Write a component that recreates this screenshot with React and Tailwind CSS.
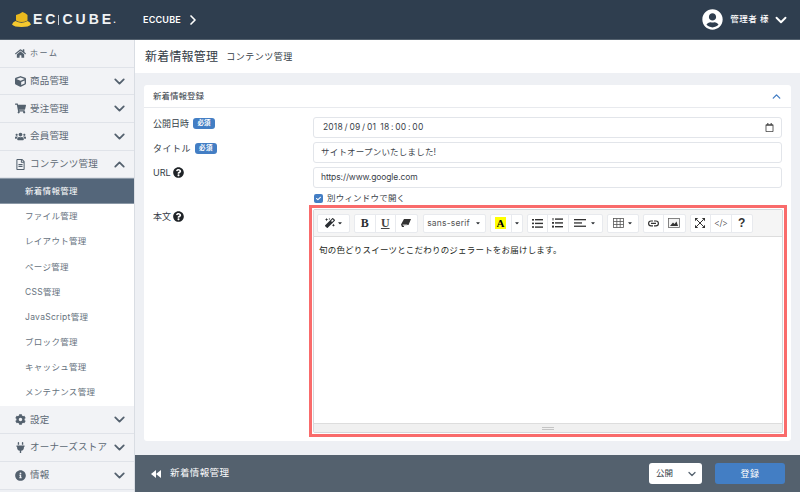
import {
  FaHome, FaCube, FaShoppingCart, FaUsers, FaRegFileAlt, FaCog, FaPlug, FaInfoCircle,
  FaQuestionCircle, FaMagic, FaUserCircle, FaRegCalendar, FaCheck, FaCaretDown,
} from "react-icons/fa";
import { FiChevronDown, FiChevronUp, FiChevronRight } from "react-icons/fi";

const font = { fontFamily: 'Inter, "Noto Sans CJK JP", sans-serif' };
const serif = { fontFamily: '"Liberation Serif", serif' };

const subItems = ["ファイル管理", "レイアウト管理", "ページ管理", "CSS管理", "JavaScript管理", "ブロック管理", "キャッシュ管理", "メンテナンス管理"];

function NavItem({ icon: Icon, label, open, home }) {
  return (
    <div className="flex items-center h-[27.7px] pl-[10px] pr-[6px] bg-[#f2f3f6] border-b border-[#e0e3e9]">
      <span className="w-[20px] flex justify-center text-[#54616e] text-[11px] shrink-0"><Icon /></span>
      <span className={`flex-1 text-[#5c6874] whitespace-nowrap ${home ? "text-[8px] tracking-[1.6px]" : "text-[9.5px] tracking-[0.2px]"}`}>{label}</span>
      {!home && (open
        ? <FiChevronUp className="shrink-0 text-[#54616e] text-[17px] stroke-[2.5]" />
        : <FiChevronDown className="shrink-0 text-[#54616e] text-[17px] stroke-[2.5]" />)}
    </div>
  );
}

function Sidebar() {
  return (
    <aside className="w-[135px] shrink-0 bg-white border-r border-[#d9dde3] flex flex-col">
      <NavItem icon={FaHome} label="ホーム" home />
      <NavItem icon={FaCube} label="商品管理" />
      <NavItem icon={FaShoppingCart} label="受注管理" />
      <NavItem icon={FaUsers} label="会員管理" />
      <NavItem icon={FaRegFileAlt} label="コンテンツ管理" open />
      <div className="h-[25.5px] bg-[#54667a] border-y border-[#8b98a6] pl-[25px] flex items-center text-[8.5px] tracking-[0.3px] text-white">新着情報管理</div>
      {subItems.map((s) => (
        <div key={s} className="h-[25.2px] pl-[25px] flex items-center text-[8.5px] tracking-[0.3px] text-[#66727e]">{s}</div>
      ))}
      <div className="h-[1px] shrink-0" />
      <NavItem icon={FaCog} label="設定" />
      <NavItem icon={FaPlug} label="オーナーズストア" />
      <NavItem icon={FaInfoCircle} label="情報" />
      <div className="flex-1 bg-[#eef0f4]" />
    </aside>
  );
}

function Header() {
  return (
    <header className="h-[40px] shrink-0 bg-[#2f3e4f] border-b border-[#54616e] flex items-center text-white">
      <div className="w-[135px] flex items-center pl-[12px] shrink-0">
        <svg width="19" height="15" viewBox="0 0 19 15" className="shrink-0">
          <path d="M0 12.5 Q1 9.5 3.5 9 Q9.5 12.5 15.5 9 Q18 9.5 19 12.5 Q17 15 9.5 15 Q2 15 0 12.5Z" fill="#f5c92f" />
          <path d="M4 3 Q8 2 10.5 0 Q13.5 1 15.5 3 L15.5 8.5 Q9.5 11.5 4 8.5Z" fill="#eab91e" />
        </svg>
        <span className="ml-[2px] flex items-center text-[14px] font-bold text-[#f0f2f4] whitespace-nowrap" style={{ fontFamily: '"Liberation Sans", sans-serif' }}>
          <span className="tracking-[3px]">EC</span>
          <span className="w-px h-[10px] bg-[#c9ced4] mr-[3px]" />
          <span className="tracking-[3px]">CUBE</span>
          <span className="text-[9px] -ml-[1px] mt-[3px]">.</span>
        </span>
      </div>
      <span className="ml-[8px] text-[9px] font-semibold tracking-[0.2px]">ECCUBE</span>
      <FiChevronRight className="ml-[4px] text-[16px] stroke-[2.5]" />
      <div className="ml-auto flex items-center pr-[10px]">
        <FaUserCircle className="text-[21px]" />
        <span className="ml-[7px] text-[8.5px] tracking-[0.5px] font-medium">管理者 様</span>
        <FiChevronDown className="ml-[3px] text-[18px] stroke-[2.5]" />
      </div>
    </header>
  );
}

function Required() {
  return <span className="ml-[4px] inline-flex items-center justify-center w-[22px] h-[11px] rounded-[3px] bg-[#437ec4] text-white text-[6.5px] font-bold">必須</span>;
}

function Help() {
  return <FaQuestionCircle className="ml-[2px] text-[11px] text-[#1f2327]" />;
}

function Label({ children, className = "" }) {
  return <div className={`flex items-center pl-px text-[9px] text-[#333c46] h-[11px] ${className}`}>{children}</div>;
}

function Input({ children, className = "" }) {
  return (
    <div className={`h-[21px] flex items-center px-[7px] border border-[#e2e5ea] rounded-[3px] bg-white text-[8.5px] text-[#3b434b] ${className}`}>
      {children}
    </div>
  );
}

function ToolGroup({ children, className = "" }) {
  return <div className={`flex h-[19px] rounded-[2px] border border-[#e8eaee] bg-white divide-x divide-[#e8eaee] ${className}`}>{children}</div>;
}

function Tool({ children, w = "w-[20.5px]" }) {
  return <div className={`${w} h-full flex items-center justify-center text-[#2b2f33] text-[9px]`}>{children}</div>;
}

const Caret = () => <FaCaretDown className="ml-[2px] text-[6px] shrink-0" />;

function Editor() {
  return (
    <div className="-ml-[4px] -mr-[5px] mt-[2px] border-[3px] border-[#f96b6b] p-px flex-1 flex">
      <div className="flex-1 flex flex-col border border-[#d5d8dc] rounded-[2px]">
        <div className="h-[27px] shrink-0 flex items-center gap-[4px] pl-[3px] bg-[#f5f5f5] border-b border-[#dddddd]">
          <ToolGroup>
            <Tool w="w-[31px]"><FaMagic className="text-[10px]" /><Caret /></Tool>
          </ToolGroup>
          <ToolGroup className="mr-[1px]">
            <Tool><span className="text-[12px] font-bold" style={serif}>B</span></Tool>
            <Tool><span className="text-[12px] font-bold underline text-[#444]" style={serif}>U</span></Tool>
            <Tool>
              <svg width="10" height="8" viewBox="0 0 10 8" fill="#333">
                <path d="M3 0h7L7.500 6H3.500L2.800 8H1L0 5.500z" />
                <path d="M1.500 5.500h5L6 6.800H2z" fill="#ddd" />
              </svg>
            </Tool>
          </ToolGroup>
          <ToolGroup>
            <Tool w="w-[61px]"><span className="text-[8.5px] text-[#555] tracking-[0.2px]">sans-serif</span><FaCaretDown className="ml-[5px] text-[6px]" /></Tool>
          </ToolGroup>
          <ToolGroup>
            <Tool w="w-[21px]"><span className="w-[11px] h-[12px] bg-[#ffff00] flex items-center justify-center text-[11px] font-bold text-black" style={serif}>A</span></Tool>
            <Tool w="w-[10px]"><FaCaretDown className="text-[6px]" /></Tool>
          </ToolGroup>
          <ToolGroup>
            <Tool>
              <svg width="11" height="9" viewBox="0 0 11 9" fill="#333">
                <rect x="0" y="0" width="2" height="1.6" /><rect x="3" y="0" width="8" height="1.4" />
                <rect x="0" y="3.6" width="2" height="1.6" /><rect x="3" y="3.7" width="8" height="1.4" />
                <rect x="0" y="7.2" width="2" height="1.6" /><rect x="3" y="7.4" width="8" height="1.4" />
              </svg>
            </Tool>
            <Tool>
              <svg width="11" height="10" viewBox="0 0 11 10" fill="#333">
                <rect x="0.5" y="0" width="1" height="2.4" /><rect x="3" y="0.4" width="8" height="1.4" />
                <rect x="0" y="4" width="2" height="1.8" /><rect x="3" y="4.2" width="8" height="1.4" />
                <rect x="0" y="7.6" width="2" height="2" /><rect x="3" y="8" width="8" height="1.4" />
              </svg>
            </Tool>
            <Tool w="w-[33px]">
              <svg width="12" height="8" viewBox="0 0 12 8" fill="#333">
                <rect x="0" y="0" width="12" height="1.3" /><rect x="0" y="3.3" width="8" height="1.3" /><rect x="0" y="6.6" width="12" height="1.3" />
              </svg>
              <FaCaretDown className="ml-[4px] text-[6px] shrink-0" />
            </Tool>
          </ToolGroup>
          <ToolGroup>
            <Tool w="w-[30px]">
              <svg width="11" height="10" viewBox="0 0 11 10" fill="none" stroke="#555" strokeWidth="0.8">
                <rect x="0.5" y="0.5" width="10" height="9" />
                <path d="M0.5 3.5h10M0.5 6.5h10M3.8 0.5v9M7.2 0.5v9" />
              </svg>
              <FaCaretDown className="ml-[3px] text-[6px] shrink-0" />
            </Tool>
          </ToolGroup>
          <ToolGroup>
            <Tool>
              <svg width="11" height="7" viewBox="0 0 11 7" fill="none" stroke="#333" strokeWidth="1.2">
                <path d="M5 1H3a2.400 2.400 0 0 0 0 4.800h2M6 1h2a2.400 2.400 0 0 1 0 4.800H6M3 3.400h5" />
              </svg>
            </Tool>
            <Tool>
              <svg width="12" height="10" viewBox="0 0 12 10">
                <rect x="0.500" y="0.500" width="11" height="9" fill="#f4f4f4" stroke="#666" strokeWidth="0.8" />
                <path d="M2 8 L5 4.500 L6.500 6 L8.500 3.500 L10 8Z" fill="#333" />
              </svg>
            </Tool>
          </ToolGroup>
          <ToolGroup>
            <Tool>
              <svg width="10" height="10" viewBox="0 0 10 10">
                <path d="M1.500 1.500 8.500 8.500M8.500 1.500 1.500 8.500" stroke="#333" strokeWidth="1" fill="none" />
                <path d="M0 0h3.200L0 3.200zM10 0v3.200L6.800 0zM0 10V6.800L3.200 10zM10 10H6.800L10 6.800z" fill="#333" />
              </svg>
            </Tool>
            <Tool><span className="text-[9px] font-light text-[#333] tracking-[-0.5px]">&lt;/&gt;</span></Tool>
            <Tool><span className="text-[12px] font-bold text-[#333]" style={{ fontFamily: '"Liberation Sans", sans-serif' }}>?</span></Tool>
          </ToolGroup>
        </div>
        <div className="flex-1 bg-white pl-[5px] pt-[7px] text-[8.5px] tracking-[0.2px] text-[#1d1f22]">旬の色どりスイーツとこだわりのジェラートをお届けします。</div>
        <div className="h-[9px] shrink-0 bg-[#f0f0f0] border-t border-[#dddddd] flex flex-col items-center justify-center gap-[1px]">
          <div className="w-[12px] h-px bg-[#c4c4c4]" />
          <div className="w-[12px] h-px bg-[#c4c4c4]" />
        </div>
      </div>
    </div>
  );
}

function Card() {
  return (
    <section className="mx-[9px] mt-[12px] h-[356px] bg-white rounded-[3px] flex flex-col">
      <div className="h-[23px] shrink-0 flex items-center justify-between pl-[9px] pr-[8px] border-b border-[#e8eaee] text-[8.5px] text-[#333c46]">
        <span>新着情報登録</span>
        <FiChevronUp className="text-[#437ec4] text-[13px] stroke-[2.5]" />
      </div>
      <div className="flex-1 flex pl-[8px] pr-[9px] pt-[9px] pb-[4px]">
        <div className="w-[161px] shrink-0">
          <Label className="mt-[1px]">公開日時<Required /></Label>
          <Label className="mt-[14px] tracking-[0.5px]">タイトル<Required /></Label>
          <Label className="mt-[13px]">URL<Help /></Label>
          <Label className="mt-[33px]">本文<Help /></Label>
        </div>
        <div className="flex-1 flex flex-col">
          <Input className="justify-between pl-[9px]">
            <span className="tracking-[0.15px]">2018&#8201;/&#8201;09&#8201;/&#8201;01 &#8201;18&#8201;:&#8201;00&#8201;:&#8201;00</span>
            <FaRegCalendar className="text-[9px] text-[#444]" />
          </Input>
          <Input className="mt-[4px] tracking-[0.2px]">サイトオープンいたしました!</Input>
          <Input className="mt-[4px] tracking-[-0.1px]">https://www.google.com</Input>
          <div className="mt-[5px] flex items-center h-[10px] text-[8.5px] tracking-[0.2px] text-[#3b434b]">
            <span className="ml-px w-[9px] h-[9px] rounded-[2px] bg-[#437ec4] flex items-center justify-center text-white text-[5px] mr-[4px]"><FaCheck /></span>
            別ウィンドウで開く
          </div>
          <Editor />
        </div>
      </div>
    </section>
  );
}

function Footer() {
  return (
    <footer className="h-[37px] shrink-0 mt-[14px] bg-[#54616e] flex items-center pl-[16px] pr-[15px] text-white">
      <svg width="10" height="8" viewBox="0 0 10 8" fill="white"><path d="M5 0v8L0 4zM10 0v8L5 4z" /></svg>
      <span className="ml-[9px] text-[9.5px] tracking-[0.4px]">新着情報管理</span>
      <div className="ml-auto w-[53px] h-[21px] rounded-[3px] bg-white flex items-center justify-between pl-[7px] pr-[4px] text-[8.5px] text-[#333c46]">
        公開
        <FiChevronDown className="text-[12px] text-[#54616e] stroke-[2.5]" />
      </div>
      <div className="ml-[13px] w-[70px] h-[21px] rounded-[3px] bg-[#437ec4] flex items-center justify-center text-[9px] tracking-[0.4px]">登録</div>
    </footer>
  );
}

export default function App() {
  return (
    <div className="w-[800px] h-[492px] flex flex-col overflow-hidden bg-[#eef0f4]" style={font}>
      <Header />
      <div className="flex flex-1 min-h-0">
        <Sidebar />
        <main className="flex-1 min-w-0 flex flex-col">
          <div className="h-[33px] shrink-0 bg-white flex items-center pl-[10px]">
            <h1 className="text-[12px] text-[#333c46] tracking-[0.2px]">新着情報管理</h1>
            <span className="ml-[8px] text-[9px] tracking-[0.5px] text-[#333c46]">コンテンツ管理</span>
          </div>
          <Card />
          <Footer />
        </main>
      </div>
    </div>
  );
}
